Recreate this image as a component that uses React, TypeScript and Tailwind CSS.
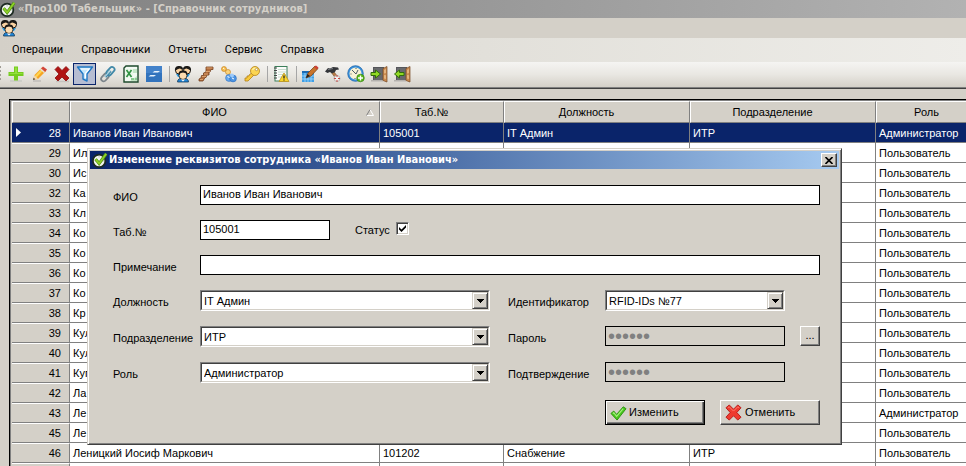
import type { ReactNode } from "react";

type Employee = { no: string; name: string; tab: string; post: string; unit: string; role: string };

const USER = "Пользователь";
const ADMIN = "Администратор";

const short = (no: string, name: string, role = USER): Employee => ({ no, name, tab: "", post: "", unit: "", role });

const employees: Employee[] = [
  { no: "28", name: "Иванов Иван Иванович", tab: "105001", post: "IT Админ", unit: "ИТР", role: ADMIN },
  short("29", "Ил"),
  short("30", "Ис"),
  short("32", "Ка"),
  short("33", "Кл"),
  short("34", "Ко"),
  short("35", "Ко"),
  short("36", "Ко"),
  short("37", "Ко"),
  short("38", "Кр"),
  short("39", "Кул"),
  short("40", "Кул"),
  short("41", "Куп"),
  short("42", "Ла"),
  short("43", "Ле", ADMIN),
  short("45", "Ле"),
  { no: "46", name: "Леницкий Иосиф Маркович", tab: "101202", post: "Снабжение", unit: "ИТР", role: USER },
  { no: "", name: "", tab: "", post: "", unit: "", role: "" },
];

function Svg({ children, size = "size-[18px]" }: { children: ReactNode; size?: string }) {
  return (
    <svg viewBox="0 0 18 18" className={`${size} shrink-0`} aria-hidden="true">
      {children}
    </svg>
  );
}

function AppLogo() {
  return (
    <Svg size="size-4">
      <circle cx="8" cy="10" r="7" fill="#f4f6f2" stroke="#1d2b23" strokeWidth="2" />
      <path d="M8 5v1M3.500 10h1M8 14v1M12 10h1" stroke="#8a938c" />
      <path d="M4 8l4 5 8-11" fill="none" stroke="#4f8f12" strokeWidth="3.500" />
      <path d="M4 8l4 5 8-11" fill="none" stroke="#8ed02a" strokeWidth="2" />
    </Svg>
  );
}

function PeopleIcon() {
  return (
    <Svg>
      <path d="M2 9h5v3H4zM16 9h-5v3h3z" fill="#2a9be0" />
      <circle cx="5" cy="5.500" r="3.500" fill="#fbd3a2" stroke="#1b1a18" strokeWidth="1" />
      <circle cx="13" cy="5.500" r="3.500" fill="#fbd3a2" stroke="#1b1a18" strokeWidth="1" />
      <path d="M1 6C.5 2 3 .8 5.500 1 8 1 9 2.500 9 4.500L5.500 3.500 3 4.500zM17 6c.5-4-2-5.200-4.500-5C10 1 9 2.500 9 4.500l3.500-1L15 4.500z" fill="#1b1a18" />
      <path d="M3.500 17c0-3 2.500-4 5.500-4s5.500 1 5.500 4z" fill="#2186d8" stroke="#143a58" strokeWidth=".8" />
      <circle cx="9" cy="10.500" r="4" fill="#fddcb0" stroke="#1b1a18" strokeWidth=".8" />
      <path d="M4.800 10.500C4 6.500 6 5.500 9 5.500s5 1 4.200 5L11.500 8 9 7.500 6.500 8z" fill="#1b1a18" />
      <path d="M7 14.500l2 2 2-2z" fill="#fff" />
    </Svg>
  );
}

function PlusIcon() {
  return (
    <Svg>
      <path d="M3 16h12" stroke="#c9cbc4" strokeWidth="1.500" />
      <path d="M7 1.500h4V7h5.500v4H11v4.500H7V11H1.500V7H7z" fill="#76cc20" />
      <path d="M8 2.500h2V8h5.500v1H2.500V8H8z" fill="#94e03c" />
    </Svg>
  );
}

function PencilIcon() {
  return (
    <Svg>
      <path d="M3 16h8" stroke="#bfbdb8" strokeWidth="1.500" />
      <path d="M3 15l1.500-5L12 2.500l4 3.500-8 8z" fill="#f5a524" />
      <path d="M5 11l7.500-8 1.500 1.500-7.500 8z" fill="#ffd44e" />
      <path d="M11 3.500L13 1.500l4 3-2 2.500z" fill="#d2453a" />
      <path d="M10 4.500l1-1 4 3.500-1 1z" fill="#e4e0dc" />
      <path d="M3 15l1.500-5 3.500 4z" fill="#f3d8ad" />
      <path d="M3 15l.7-2.300 1.600 1.600z" fill="#333" />
    </Svg>
  );
}

function DeleteIcon() {
  return (
    <Svg>
      <path d="M3 16.500h13" stroke="#c4c2bd" strokeWidth="1.500" />
      <path d="M2 4.500l3-3 4 4 4-4 3 3-4 4.500 4 4-3 3-4-4-4 4-3-3 4-4z" fill="#b01414" stroke="#8c0c0c" strokeWidth=".8" />
    </Svg>
  );
}

function FilterIcon() {
  return (
    <Svg>
      <path d="M1.500 2h15l-5.500 7v7l-4-2V9z" fill="#c4e6fb" stroke="#2178c4" strokeWidth="1.400" strokeLinejoin="round" />
      <path d="M5 4h8l-3.500 4.500V13" fill="none" stroke="#fff" strokeWidth="1.200" />
    </Svg>
  );
}

function LinkIcon() {
  return (
    <Svg>
      <g transform="rotate(-48 9 9)" fill="none">
        <rect x="0" y="6.500" width="9" height="5" rx="2.500" stroke="#7c858b" strokeWidth="1.800" />
        <rect x="8" y="6.500" width="9.500" height="5" rx="2.500" stroke="#4189a8" strokeWidth="1.800" />
        <path d="M5 9h8" stroke="#4189a8" strokeWidth="2.500" />
        <path d="M5 8.500h8" stroke="#b7dceb" strokeWidth="1" />
      </g>
    </Svg>
  );
}

function ExcelIcon() {
  return (
    <Svg>
      <path d="M2 3l2-2h12v16H2z" fill="#f3faf3" stroke="#1e4a2c" strokeWidth="1.400" />
      <path d="M11 4h4v12H8l7-5V8h-4z" fill="#c3e6c6" />
      <path d="M9 13h3v2H9zM13 13h2v2h-2z" fill="#8acb92" />
      <rect x="3" y="4" width="8" height="8" fill="#e9f7e9" />
      <path d="M4.500 5l5 7M9.500 5l-5 7" stroke="#2e9140" strokeWidth="1.600" />
    </Svg>
  );
}

function SwapIcon() {
  return (
    <Svg>
      <rect x="1" y="1" width="16" height="16" fill="#3273bd" />
      <rect x="1" y="1" width="16" height="7" fill="#4382ca" />
      <path d="M7.500 7.500l2-1.500H15l-2 1.500zM3.500 11.500l2-1.500H11l-2 1.500z" fill="#e8f2fb" />
    </Svg>
  );
}

function StairsIcon() {
  return (
    <Svg>
      <path d="M9 2h7v2.500h-2L13 7h-1v3h-2l-1 2.500H8L6 16H2v-2l2-1 .5-2.500h2V8L9 7z" fill="#b06c3c" stroke="#74401e" strokeWidth=".8" />
      <path d="M9.500 3h6M9 6.500h4M7 9h4M5 11.500h4M3 14.500h3" stroke="#d9a06c" />
    </Svg>
  );
}

function BallsIcon() {
  return (
    <Svg>
      <circle cx="4" cy="4" r="2.500" fill="#f6bd4c" stroke="#c07c1a" strokeWidth=".6" />
      <circle cx="8" cy="7" r="2.500" fill="#fbd47c" stroke="#c07c1a" strokeWidth=".6" />
      <circle cx="9" cy="13" r="3.400" fill="#66aaf0" stroke="#2a6cbc" strokeWidth=".6" />
      <circle cx="13" cy="13.500" r="3.400" fill="#4c94e2" stroke="#2a6cbc" strokeWidth=".6" />
      <circle cx="12" cy="10.500" r="2" fill="#9ccafa" />
      <path d="M7.500 11.500l2 1M12 13l2 1M3 3l1.500 1" stroke="#fff" />
    </Svg>
  );
}

function KeyIcon() {
  return (
    <Svg>
      <path d="M10 7l2 2-7 7H2v-3h2v-2h2V10z" fill="#f8c93a" stroke="#b3821a" strokeWidth=".8" />
      <circle cx="12" cy="6" r="4.500" fill="#fbd552" stroke="#b3821a" strokeWidth=".8" />
      <path d="M9.500 5c1-2 3-2 4-1.500" fill="none" stroke="#fff0a8" strokeWidth="1.200" />
      <circle cx="13.500" cy="4.500" r="1.200" fill="#fff" stroke="#9c7420" strokeWidth=".6" />
    </Svg>
  );
}

function ReportIcon() {
  return (
    <Svg>
      <rect x="3" y="1.500" width="12" height="14.500" fill="#fbfcfa" stroke="#3c7f5a" strokeWidth="1" />
      <path d="M6 4.500h8M6 7h8M6 9.500h8M6 12h8" stroke="#c8dccf" />
      <path d="M2 3h3M2 5.500h3M2 8h3M2 10.500h3M2 13h3" stroke="#444" strokeWidth="1.200" />
      <path d="M12 8l5 8.500H7z" fill="#fbd62c" stroke="#bd931a" strokeWidth=".8" strokeLinejoin="round" />
      <path d="M12 10.500v3M12 14.500v1" stroke="#222" strokeWidth="1.300" />
    </Svg>
  );
}

function CalendarPenIcon() {
  return (
    <Svg>
      <rect x="1" y="6" width="12" height="11" fill="#3f9fe6" />
      <path d="M1 11h12M1 14h12M4 8v9M7 8v9M10 8v9" stroke="#a7d8fa" strokeWidth=".8" />
      <path d="M1 6h12v2H1z" fill="#1c6bb4" />
      <path d="M5 13l2-5 7-7 3 2.500-7 7.500z" fill="#c8742c" stroke="#703c14" strokeWidth=".7" />
      <path d="M13 2l2-1.500 2.500 2L16 4.500z" fill="#cc4038" />
      <path d="M5 13l1.500-4L9 11z" fill="#222" />
    </Svg>
  );
}

function HammerIcon() {
  return (
    <Svg>
      <path d="M7 7l2-1.500 5 6.500-2 2z" fill="#b87c48" stroke="#6d4520" strokeWidth=".5" />
      <path d="M1 6.500L4 3l2 .5L9 2l5 .5 1 2-3 .5-1 2-3 1.500L6 7 3.500 8z" fill="#34363a" />
      <path d="M4 4.500l5-1" stroke="#787c82" />
      <circle cx="13" cy="13.500" r="3" fill="#f3eeee" stroke="#b0a8a4" strokeWidth=".8" />
      <path d="M13 10v2M13 15v2M10 13.500h2M14 13.500h2" stroke="#c44840" />
    </Svg>
  );
}

function ClockIcon() {
  return (
    <Svg>
      <circle cx="8.500" cy="8.500" r="7" fill="#f7f1d4" stroke="#3d92dc" strokeWidth="2" />
      <circle cx="8.500" cy="8.500" r="7.800" fill="none" stroke="#1b548e" strokeWidth=".5" />
      <path d="M5 5l4 4 2-4M9 3v1M3.500 9h1M8 14v-1" fill="none" stroke="#4c5b66" />
      <circle cx="13.500" cy="13" r="3.800" fill="#58b51a" stroke="#2f7f10" strokeWidth=".6" />
      <path d="M13.500 10.500v5M11 13h5" stroke="#fff" strokeWidth="1.400" />
    </Svg>
  );
}

function DoorIcon({ out = false }: { out?: boolean }) {
  return (
    <Svg>
      <path d="M3 2h11v13H3z" fill="#55565a" />
      <path d="M4 3h9v12H4z" fill="#68696d" />
      <path d="M1 15h12v1.500H1z" fill="#b4b2ae" />
      <path d="M13 3.500l4-2v15.500l-4-1.500z" fill="#c98a50" stroke="#754722" strokeWidth=".7" />
      <path d="M14 5l2-1v4l-2 .5zM14 10l2 .3V14l-2-.5z" fill="#e4b37c" />
      <path
        d={out ? "M1.500 9L6.500 5v2.500h4.500v3H6.500V13z" : "M10.500 9L5.500 5v2.500H1v3h4.500V13z"}
        fill="#92d924"
        stroke="#326e0a"
        strokeWidth="1"
      />
    </Svg>
  );
}

function ToolButton({ label, active = false, children }: { label: string; active?: boolean; children: ReactNode }) {
  return (
    <button
      type="button"
      aria-label={label}
      aria-pressed={active}
      className={`flex h-[22px] w-[23px] shrink-0 items-center justify-center border ${
        active ? "border-[#0a246a] bg-[#b6bdd2]" : "border-transparent"
      }`}
    >
      {children}
    </button>
  );
}

function Separator() {
  return <span className="mr-px ml-1 h-4 w-px shrink-0 bg-[#a6a6a6]" />;
}

const fieldBox = "h-5 border border-black px-[2px] outline-none";

function Caption({ htmlFor, children, width }: { htmlFor: string; children: ReactNode; width: string }) {
  return (
    <label htmlFor={htmlFor} className={`${width} shrink-0 pt-1 leading-4`}>
      {children}
    </label>
  );
}

function Combo({ id, value, width }: { id: string; value: string; width: string }) {
  return (
    <div
      className={`relative h-[21px] ${width} shrink-0 border border-t-[#808080] border-r-white border-b-white border-l-[#808080]`}
    >
      <select
        id={id}
        defaultValue={value}
        className="block h-full w-full appearance-none border border-t-[#404040] border-r-[#d4d0c8] border-b-[#d4d0c8] border-l-[#404040] bg-white pl-[2px] leading-4 outline-none"
      >
        <option>{value}</option>
      </select>
      <span className="pointer-events-none absolute top-px right-px flex h-[17px] w-4 items-center justify-center border border-t-[#d4d0c8] border-r-[#404040] border-b-[#404040] border-l-[#d4d0c8] bg-[#d4d0c8] shadow-[inset_1px_1px_#fff,inset_-1px_-1px_#808080]">
        <svg viewBox="0 0 7 4" className="h-1 w-[7px]" shapeRendering="crispEdges" aria-hidden="true">
          <path d="M0 0h7L3.500 4z" />
        </svg>
      </span>
    </div>
  );
}

const raised =
  "border border-t-white border-r-[#404040] border-b-[#404040] border-l-white bg-[#d4d0c8] shadow-[inset_-1px_-1px_#808080]";

function EditDialog() {
  return (
    <section
      role="dialog"
      aria-labelledby="dialog-title"
      className="absolute top-[148px] left-[87px] w-[755px] border border-t-[#d4d0c8] border-r-[#404040] border-b-[#404040] border-l-[#d4d0c8] bg-[#d4d0c8] p-[2px] shadow-[inset_1px_1px_#fff,inset_-1px_-1px_#808080]"
    >
      <header className="flex h-[18px] items-center bg-linear-to-r from-[#0a246a] to-[#a6caf0] pr-[2px] pl-[2px] text-white">
        <AppLogo />
        <h2 id="dialog-title" className="ml-px flex-1 pt-px font-['DejaVu_Sans_Condensed','DejaVu_Sans',sans-serif] font-bold whitespace-nowrap">
          Изменение реквизитов сотрудника «Иванов Иван Иванович»
        </h2>
        <button type="button" aria-label="Закрыть" className={`flex h-[14px] w-4 items-center justify-center ${raised}`}>
          <svg viewBox="0 0 8 7" className="h-[7px] w-2" aria-hidden="true">
            <path d="M.5 0l7 7M7.500 0l-7 7" stroke="#000" strokeWidth="1.600" />
          </svg>
        </button>
      </header>

      <form className="flex flex-col gap-[15px] pt-4 pr-[19px] pb-[17px] pl-[23px]">
        <div className="flex">
          <Caption htmlFor="fio" width="w-[87px]">ФИО</Caption>
          <input id="fio" defaultValue="Иванов Иван Иванович" className={`${fieldBox} min-w-0 flex-1 bg-white pb-[2px]`} />
        </div>
        <div className="flex">
          <Caption htmlFor="tab" width="w-[87px]">Таб.№</Caption>
          <input id="tab" defaultValue="105001" className={`${fieldBox} w-[130px] bg-white pb-[2px]`} />
          <label htmlFor="status" className="ml-[25px] w-[41px] pt-[2px] leading-4">Статус</label>
          <span className="mt-[2px] grid size-[13px] place-items-center">
            <input
              id="status"
              type="checkbox"
              defaultChecked
              className="peer col-start-1 row-start-1 size-[13px] appearance-none border border-t-[#808080] border-r-white border-b-white border-l-[#808080] bg-white shadow-[inset_1px_1px_#404040,inset_-1px_-1px_#d4d0c8]"
            />
            <svg viewBox="0 0 7 7" className="pointer-events-none z-10 col-start-1 row-start-1 hidden size-[7px] peer-checked:block" aria-hidden="true">
              <path d="M0 2l2.500 2.500L7 0v2.500L2.500 7 0 4.500z" />
            </svg>
          </span>
        </div>
        <div className="flex">
          <Caption htmlFor="note" width="w-[87px]">Примечание</Caption>
          <input id="note" className={`${fieldBox} min-w-0 flex-1 bg-white pb-[2px]`} />
        </div>
        <div className="flex h-[21px]">
          <Caption htmlFor="post" width="w-[87px]">Должность</Caption>
          <Combo id="post" value="IT Админ" width="w-[290px]" />
          <span className="w-[18px]" />
          <Caption htmlFor="ident" width="w-[97px]">Идентификатор</Caption>
          <Combo id="ident" value="RFID-IDs №77" width="w-[180px]" />
        </div>
        <div className="flex h-[21px] items-start">
          <Caption htmlFor="unit" width="w-[87px]">Подразделение</Caption>
          <Combo id="unit" value="ИТР" width="w-[290px]" />
          <span className="w-[18px]" />
          <Caption htmlFor="pass" width="w-[97px]">Пароль</Caption>
          <input id="pass" type="password" disabled defaultValue="123456" className={`${fieldBox} w-[180px] text-xl text-[#808080]`} />
          <button type="button" className={`ml-auto flex size-5 items-center justify-center pb-[2px] ${raised}`}>...</button>
        </div>
        <div className="flex h-[21px] items-start">
          <Caption htmlFor="role" width="w-[87px]">Роль</Caption>
          <Combo id="role" value="Администратор" width="w-[290px]" />
          <span className="w-[18px]" />
          <Caption htmlFor="confirm" width="w-[97px]">Подтверждение</Caption>
          <input id="confirm" type="password" disabled defaultValue="123456" className={`${fieldBox} w-[180px] text-xl text-[#808080]`} />
        </div>
        <div className="mt-[2px] flex justify-end gap-[15px]">
          <button
            type="button"
            className="flex h-[25px] w-[100px] items-center gap-[2px] border border-black bg-[#d4d0c8] pl-1 shadow-[inset_1px_1px_#fff,inset_-1px_-1px_#404040,inset_-2px_-2px_#808080]"
          >
            <Svg size="size-[17px]">
              <path d="M1 10l3-2.500 3 3.500 7-8 3 2L7.500 17z" fill="#48c81e" stroke="#2c9210" strokeWidth="1" />
              <path d="M3 10l1-.8L7 13l7-8" fill="none" stroke="#a5f07c" strokeWidth="1.200" />
            </Svg>
            Изменить
          </button>
          <button type="button" className={`flex h-[25px] w-[100px] items-center gap-[3px] pl-1 ${raised}`}>
            <Svg size="size-[17px]">
              <path d="M1 4l3.500-3L9 5.500 13.500 1 17 4l-4.500 5 4.500 5-3.500 3L9 12.500 4.500 17 1 14l4.500-5z" fill="#ee3a30" stroke="#b81c18" strokeWidth="1" />
              <path d="M3 4l1.500-1L9 7.500 13.500 3 15 4" fill="none" stroke="#ff7c6c" strokeWidth="1" />
            </Svg>
            Отменить
          </button>
        </div>
      </form>
    </section>
  );
}

const headers = ["ФИО", "Таб.№", "Должность", "Подразделение", "Роль"];

function EmployeeTable() {
  return (
    <div className="min-h-0 flex-1 overflow-hidden border-t border-l border-black">
      <div className="border-t border-l border-[#808080] bg-[#d4d0c8] pl-px">
        <table className="w-[986px] table-fixed border-separate border-spacing-0">
          <colgroup>
            <col className="w-[58px]" />
            <col className="w-[310px]" />
            <col className="w-[124px]" />
            <col className="w-[186px]" />
            <col className="w-[186px]" />
            <col />
          </colgroup>
          <thead>
            <tr className="h-[22px]">
              <th className="border border-t-white border-r-[#808080] border-b-[#808080] border-l-white p-0" aria-label="№" />
              {headers.map((title) => (
                <th
                  key={title}
                  scope="col"
                  className="border border-t-white border-r-[#808080] border-b-[#808080] border-l-white p-0 leading-5 font-normal"
                >
                  <span className="flex items-center pr-[5px]">
                    <span className="flex-1 text-center">{title}</span>
                    <span className="flex w-4 justify-end">
                      {title === "ФИО" && (
                        <svg viewBox="0 0 8 7" className="h-[7px] w-2" aria-hidden="true">
                          <path d="M.5 6.500h7L4 .5" fill="none" stroke="#fff" />
                          <path d="M4 .5l-3.500 6" stroke="#808080" />
                        </svg>
                      )}
                    </span>
                  </span>
                </th>
              ))}
            </tr>
          </thead>
          <tbody>
            {employees.map((e, i) => {
              const selected = i === 0;
              const cell = "border-r border-b border-[#808080] p-0 pl-[3px]";
              return (
                <tr
                  key={e.no}
                  className={`h-5 leading-4 whitespace-nowrap ${selected ? "bg-[#0a246a] text-white" : "bg-white text-black"}`}
                >
                  <th
                    scope="row"
                    className={`border-r border-b border-[#808080] p-0 pr-2 text-right font-normal ${
                      selected ? "" : "border-t border-t-white bg-[#d4d0c8]"
                    }`}
                  >
                    <span className="flex items-center justify-between pl-1">
                      {selected ? (
                        <svg viewBox="0 0 5 9" className="h-[9px] w-[5px]" aria-hidden="true">
                          <path d="M0 0l5 4.500L0 9z" fill="#fff" />
                        </svg>
                      ) : (
                        <span />
                      )}
                      {e.no}
                    </span>
                  </th>
                  <td className={cell}>{e.name}</td>
                  <td className={cell}>{e.tab}</td>
                  <td className={cell}>{e.post}</td>
                  <td className={cell}>{e.unit}</td>
                  <td className={cell}>{e.role}</td>
                </tr>
              );
            })}
          </tbody>
        </table>
      </div>
    </div>
  );
}

export default function App() {
  return (
    <main className="relative flex h-screen flex-col overflow-hidden bg-[#d4d0c8] font-['Liberation_Sans',Arial,sans-serif] text-[11px] text-black">
      <header className="flex h-[18px] shrink-0 items-center bg-linear-to-r from-[#808080] to-[#b2b2b2] text-[#d4d0c8]">
        <AppLogo />
        <h1 className="ml-[2px] pt-px font-['DejaVu_Sans_Condensed','DejaVu_Sans',sans-serif] font-bold whitespace-nowrap">
          «Про100 Табельщик» - [Справочник сотрудников]
        </h1>
      </header>
      <div className="flex h-5 shrink-0 items-center">
        <PeopleIcon />
      </div>
      <nav className="flex h-6 shrink-0 items-center gap-[18px] bg-linear-to-r from-[#d4d0c8] via-[#e2e0da] to-[#eeede9] pt-px pl-3 font-['Roboto',sans-serif]">
        <button type="button">Операции</button>
        <button type="button">Справочники</button>
        <button type="button">Отчеты</button>
        <button type="button">Сервис</button>
        <button type="button">Справка</button>
      </nav>
      <div
        role="toolbar"
        aria-label="Панель инструментов"
        className="flex h-[26px] shrink-0 items-center border-b border-[#808080] bg-linear-to-b from-[#f5f4f2] via-[#e9e7e2] to-[#d4d0c8] pb-[2px]"
      >
        <span className="w-1 shrink-0 self-stretch py-1">
          <span className="block h-full w-px bg-[repeating-linear-gradient(#a09c94_0_2px,transparent_2px_4px)]" />
        </span>
        <ToolButton label="Добавить"><PlusIcon /></ToolButton>
        <ToolButton label="Изменить"><PencilIcon /></ToolButton>
        <ToolButton label="Удалить"><DeleteIcon /></ToolButton>
        <ToolButton label="Фильтр" active><FilterIcon /></ToolButton>
        <ToolButton label="Связать"><LinkIcon /></ToolButton>
        <ToolButton label="Экспорт в Excel"><ExcelIcon /></ToolButton>
        <ToolButton label="Обмен"><SwapIcon /></ToolButton>
        <Separator />
        <ToolButton label="Сотрудники"><PeopleIcon /></ToolButton>
        <ToolButton label="Должности"><StairsIcon /></ToolButton>
        <ToolButton label="Подразделения"><BallsIcon /></ToolButton>
        <ToolButton label="Идентификаторы"><KeyIcon /></ToolButton>
        <Separator />
        <ToolButton label="Журнал"><ReportIcon /></ToolButton>
        <Separator />
        <ToolButton label="Табель"><CalendarPenIcon /></ToolButton>
        <ToolButton label="Настройка"><HammerIcon /></ToolButton>
        <ToolButton label="Время"><ClockIcon /></ToolButton>
        <ToolButton label="Вход"><DoorIcon /></ToolButton>
        <ToolButton label="Выход"><DoorIcon out /></ToolButton>
      </div>
      <div className="flex min-h-0 flex-1 flex-col border-t border-[#404040] pt-[10px] pl-[9px]">
        <EmployeeTable />
      </div>
      <EditDialog />
    </main>
  );
}
